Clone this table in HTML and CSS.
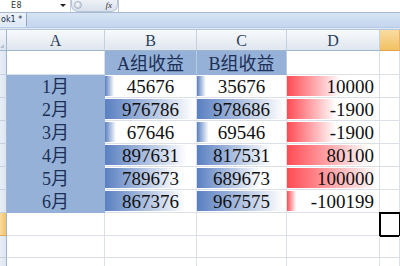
FILE: index.html
```html
<!DOCTYPE html>
<html>
<head>
<meta charset="utf-8">
<link rel="stylesheet" href="styles.css">
</head>
<body>
<div class="app">
  <div class="fbar">
    <div class="namebox"><span class="nm">E8</span><span class="dd"></span></div>
    <div class="fxpill"><span class="knob"></span><span class="fx">fx</span></div>
    <div class="formula"></div>
  </div>
  <div class="tabs"><div class="tab">ok1 *</div></div>
  <div class="strip"></div>
  <div class="sheet">
    <div class="corner"><span class="tri"></span></div>
    <div class="ch">A</div>
    <div class="ch">B</div>
    <div class="ch">C</div>
    <div class="ch">D</div>
    <div class="ch sel"></div>

    <div class="rh"></div>
    <div class="c"></div>
    <div class="c fill head">A组收益</div>
    <div class="c fill head">B组收益</div>
    <div class="c"></div>
    <div class="c"></div>

    <div class="rh"></div>
    <div class="c fill mon">1月</div>
    <div class="c num blue" style="--w:10%">45676</div>
    <div class="c num blue" style="--w:10%">35676</div>
    <div class="c num red right" style="--w:58%">10000</div>
    <div class="c"></div>

    <div class="rh"></div>
    <div class="c fill mon">2月</div>
    <div class="c num blue" style="--w:98%">976786</div>
    <div class="c num blue" style="--w:98%">978686</div>
    <div class="c num red right" style="--w:53%">-1900</div>
    <div class="c"></div>

    <div class="rh"></div>
    <div class="c fill mon">3月</div>
    <div class="c num blue" style="--w:12%">67646</div>
    <div class="c num blue" style="--w:13%">69546</div>
    <div class="c num red right" style="--w:53%">-1900</div>
    <div class="c"></div>

    <div class="rh"></div>
    <div class="c fill mon">4月</div>
    <div class="c num blue" style="--w:90%">897631</div>
    <div class="c num blue" style="--w:83%">817531</div>
    <div class="c num red right" style="--w:89%">80100</div>
    <div class="c"></div>

    <div class="rh"></div>
    <div class="c fill mon">5月</div>
    <div class="c num blue" style="--w:80%">789673</div>
    <div class="c num blue" style="--w:71%">689673</div>
    <div class="c num red right" style="--w:98%">100000</div>
    <div class="c"></div>

    <div class="rh"></div>
    <div class="c fill mon">6月</div>
    <div class="c num blue" style="--w:88%">867376</div>
    <div class="c num blue" style="--w:97%">967575</div>
    <div class="c num red right" style="--w:10%">-100199</div>
    <div class="c"></div>

    <div class="rh sel"></div>
    <div class="c"></div>
    <div class="c"></div>
    <div class="c"></div>
    <div class="c"></div>
    <div class="c active"></div>

    <div class="rh"></div>
    <div class="c"></div>
    <div class="c"></div>
    <div class="c"></div>
    <div class="c"></div>
    <div class="c"></div>

    <div class="rh"></div>
    <div class="c"></div>
    <div class="c"></div>
    <div class="c"></div>
    <div class="c"></div>
    <div class="c"></div>
  </div>
</div>
</body>
</html>
```
FILE: styles.css
```css
* { box-sizing: border-box; }
html, body { margin: 0; padding: 0; }
body {
  width: 400px;
  height: 266px;
  overflow: hidden;
  background: #fff;
  font-family: "Liberation Serif", "Noto Sans CJK SC", serif;
}
.app { width: 400px; height: 266px; overflow: hidden; }

.fbar {
  height: 13px;
  display: flex;
  background: #fff;
  border-bottom: 1px solid #a7bad3;
}
.namebox {
  width: 71px;
  display: flex;
  align-items: center;
  justify-content: space-between;
  padding: 0 4px 1px 11px;
  border-right: 1px solid #c3cfdf;
}
.nm {
  font-family: "DejaVu Sans", sans-serif;
  font-size: 8px;
  color: #333;
  letter-spacing: 0.5px;
}
.dd {
  width: 0; height: 0;
  border-left: 3px solid transparent;
  border-right: 3px solid transparent;
  border-top: 3px solid #222;
}
.fxpill {
  width: 47px;
  display: flex;
  align-items: center;
  justify-content: space-between;
  padding: 0 5px 1px 2px;
  background: linear-gradient(#eef2f7, #d9e1ec);
  border: 1px solid #b7c5d8;
  border-top: none;
  border-radius: 0 0 7px 7px;
}
.knob {
  width: 8px; height: 8px;
  border-radius: 50%;
  background: radial-gradient(circle at 40% 40%, #fdfdfe, #b9c4d2);
  border: 1px solid #aab6c6;
}
.fx {
  font-family: "Liberation Serif", serif;
  font-style: italic;
  font-size: 9px;
  color: #333;
}
.formula { flex: 1; background: #fff; border-left: 1px solid #b9c7da; }

.tabs {
  height: 15px;
  display: flex;
  background: linear-gradient(#d6e3f4, #c4d6ee);
  border-bottom: 1px solid #b5c9e4;
}
.tab {
  width: 27px;
  padding-left: 1px;
  font-family: "DejaVu Sans", sans-serif;
  font-size: 8px;
  line-height: 13px;
  color: #15294b;
  background: linear-gradient(#eef3fa, #dde8f6);
  border-right: 1px solid #8ea8cb;
  border-bottom: 1px solid #e8eef7;
}
.strip {
  height: 2px;
  background: #dfe8f4;
  border-bottom: 1px solid #b5c6dc;
}

.sheet {
  display: grid;
  grid-template-columns: 7px 98px 92px 90px 93px 20px;
  grid-template-rows: 21px 24px repeat(6, 23px) 22.5px 22.5px 22px;
}
.corner {
  background: linear-gradient(#f3f6fa, #dfe6ef);
  border-right: 1px solid #9eb6ce;
  border-bottom: 1px solid #9eb6ce;
  display: flex;
  align-items: flex-end;
  justify-content: flex-end;
  padding: 2px;
}
.tri {
  width: 0; height: 0;
  border-left: 4px solid transparent;
  border-bottom: 4px solid #b3c0cf;
}
.ch {
  background: linear-gradient(#f8fafc, #dfe6ef);
  border-right: 1px solid #c6d1df;
  border-bottom: 1px solid #9eb6ce;
  display: flex;
  align-items: center;
  justify-content: center;
  font-size: 16px;
  color: #2a3f5c;
  padding-top: 1px;
}
.ch.sel {
  background: linear-gradient(#f9dca2, #f2c162);
  border-bottom-color: #e0a14b;
  border-right-color: #e7b46a;
}
.rh {
  background: linear-gradient(90deg, #e8eef6, #dce5f1);
  border-right: 1px solid #9eb6ce;
  border-bottom: 1px solid #c5d2e2;
}
.rh.sel {
  background: linear-gradient(90deg, #f9dba0, #f2c36a);
  border-bottom-color: #e3aa57;
}
.c {
  border-right: 1px solid #dadfe8;
  border-bottom: 1px solid #dadfe8;
  display: flex;
  align-items: flex-end;
  justify-content: center;
  line-height: 20px;
  white-space: nowrap;
}
.fill {
  background: #95b1d8;
  border-color: #95b1d8;
  color: #1c2f55;
}
.head { font-size: 18px; border-right-color: #b9cbe4; }
.mon { font-size: 18px; }
.num {
  font-size: 19px;
  color: #111;
  background-repeat: no-repeat;
  background-position: 0 1px;
  background-size: var(--w) calc(100% - 2px);
}
.blue { background-image: linear-gradient(90deg, #5a80c1, #ffffff); }
.red { background-image: linear-gradient(90deg, #ff4b53, #ffffff); }
.right { justify-content: flex-end; padding-right: 5px; }
.active {
  outline: 2px solid #000;
  outline-offset: -1px;
}
```
